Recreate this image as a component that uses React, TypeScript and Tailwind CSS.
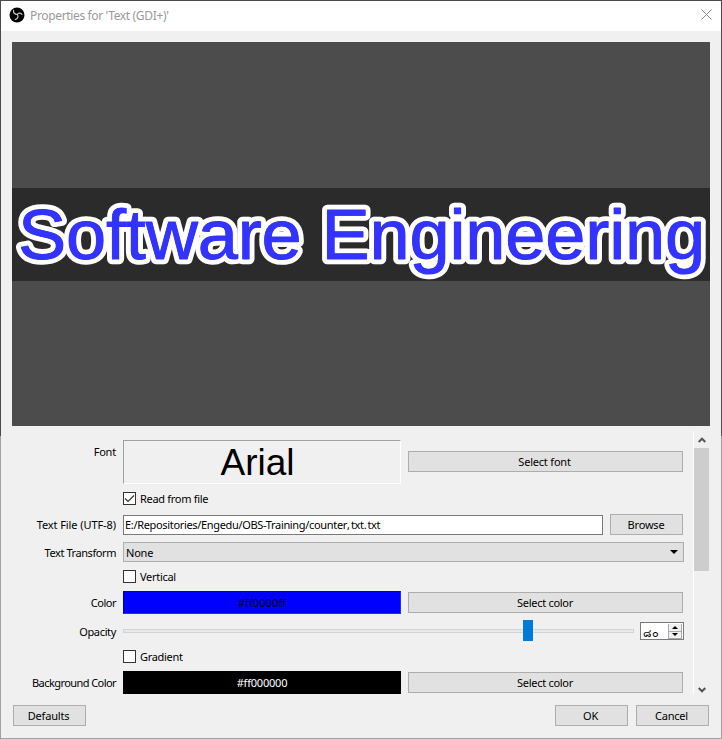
import type { ReactNode } from "react";

function Btn({ className = "", children }: { className?: string; children: ReactNode }) {
  return (
    <button className={`flex h-[21px] shrink-0 items-center justify-center border border-[#adadad] bg-[#e1e1e1] pr-[2px] ${className}`}>
      {children}
    </button>
  );
}

function Label({ className = "", children }: { className?: string; children?: ReactNode }) {
  return <div className={`mr-[7px] w-[104px] shrink-0 whitespace-nowrap text-right ${className}`}>{children}</div>;
}

function Check({ checked = false, children }: { checked?: boolean; children: ReactNode }) {
  return (
    <div className="flex h-[13px] items-center">
      <Label />
      <span className="mr-1 flex size-[13px] items-center justify-center border border-[#333] bg-white">
        {checked && (
          <svg width="11" height="11" viewBox="0 0 11 11" fill="none" stroke="#333" strokeWidth="1.2">
            <path d="M1 5.5 4 8.5 10 2.5" />
          </svg>
        )}
      </span>
      <span className="whitespace-nowrap tracking-[-0.3px]">{children}</span>
    </div>
  );
}

const previewFont = {
  x: 6,
  y: 71,
  fontSize: 71,
  fontFamily: "Liberation Sans, Arial, sans-serif",
  textLength: 687,
  lengthAdjust: "spacingAndGlyphs",
  strokeLinejoin: "round",
  paintOrder: "stroke",
} as const;

export default function App() {
  return (
    <div className="h-[739px] w-[722px] bg-[linear-gradient(to_bottom,#4c4a4c_436px,#a0a0a0_436px)] p-px">
      <div className="flex h-[737px] w-[720px] flex-col overflow-hidden bg-[#f0f0f0] font-['Noto_Sans','Liberation_Sans',sans-serif] text-[11px] leading-[13px] tracking-[-0.2px] text-black">
        <header className="flex h-[30px] shrink-0 items-center bg-white pl-2 pr-[9px] text-[12px] tracking-[-0.35px] text-[#999]">
          <svg width="16" height="16" viewBox="0 0 16 16" className="mr-[5px] mb-[2px]">
            <circle cx="8" cy="8" r="7.5" fill="#000" />
            <g fill="none" stroke="#c8c8c8" strokeWidth="1.2" strokeLinecap="round">
              <path d="M8.300 7.500C6 7.300 4.300 5.800 4.500 3.300" />
              <path d="M8.300 7.500C9.200 5.900 11.300 5.300 13 7.300" />
              <path d="M8.300 7.500C9.700 9.600 8.800 11.800 6.300 12.500" />
            </g>
          </svg>
          <span className="grow whitespace-nowrap pb-px">Properties for 'Text (GDI+)'</span>
          <svg width="11" height="11" viewBox="0 0 11 11" stroke="#888" strokeWidth="1" className="mb-[3px]">
            <path d="M.5.5l10 10M10.500 .5l-10 10" />
          </svg>
        </header>

        <div className="ml-[11px] mt-[11px] flex h-[384px] w-[698px] shrink-0 flex-col justify-center bg-[#4c4c4c]">
          <svg width="698" height="93" className="bg-[#2b2b2b]">
            <g className="blur-[0.6px]">
              <text {...previewFont} fill="#3333ff" stroke="#fff" strokeWidth="10.500">
                Software Engineering
              </text>
            </g>
            <g className="blur-[0.6px]" aria-hidden="true">
              <text {...previewFont} fill="#3333ff" stroke="#3333ff" strokeWidth="0.9">
                Software Engineering
              </text>
            </g>
          </svg>
        </div>

        <div className="ml-[11px] mt-[5px] flex h-[267px] w-[698px] shrink-0">
          <div className="flex grow flex-col pt-[9px]">
            <div className="flex h-[44px] items-start">
              <Label className="pt-[5px]">Font</Label>
              <div className="mr-[7px] flex h-[44px] w-[278px] items-center justify-center border border-[#a0a0a0] border-b-white border-r-white pr-[9px] font-['Liberation_Sans',Arial,sans-serif] text-[37px] leading-none tracking-normal">
                Arial
              </div>
              <Btn className="mt-[11px] w-[275px]">Select font</Btn>
            </div>
            <div className="mt-2">
              <Check checked>Read from file</Check>
            </div>
            <div className="mt-[9px] flex h-[21px] items-center">
              <Label className="tracking-[-0.08px]">Text File (UTF-8)</Label>
              <div className="mr-[7px] flex h-5 w-[480px] items-center whitespace-nowrap border border-[#7a7a7a] bg-white pl-px tracking-[-0.33px]">
                E:/Repositories/Engedu/OBS-Training/counter<span className="tracking-[1px]">,</span>txt<span className="tracking-[0.8px]">.</span>txt
              </div>
              <Btn className="w-[73px] pr-px">Browse</Btn>
            </div>
            <div className="mt-[7px] flex h-5 items-center">
              <Label className="tracking-[-0.42px]">Text Transform</Label>
              <div className="flex h-5 w-[561px] items-center justify-between border border-[#adadad] bg-[#e1e1e1] pl-[2px] pr-[5px]">
                None
                <svg width="8" height="4" viewBox="0 0 8 4"><path d="M0 0h8L4 4z" /></svg>
              </div>
            </div>
            <div className="mt-2">
              <Check>Vertical</Check>
            </div>
            <div className="mt-2 flex h-[23px] items-center">
              <Label className="tracking-[-0.5px]">Color</Label>
              <div className="mr-[7px] flex h-[23px] w-[278px] items-center justify-center border border-[#0000b0] border-b-[#2a2aff] border-r-[#2a2aff] bg-[#0000ff] tracking-[0.1px]">
                #ff0000ff
              </div>
              <Btn className="w-[275px] pr-px tracking-[-0.3px]">Select color</Btn>
            </div>
            <div className="mt-[6px] flex h-[21px] items-center">
              <Label className="pt-[2px] tracking-[-0.35px]">Opacity</Label>
              <div className="mr-[6px] flex h-[21px] w-[511px] items-center">
                <div className="h-1 w-[400px] border border-r-0 border-[#d0d4d2] bg-[#e7eaea]" />
                <div className="h-[21px] w-[10px] bg-[#007ad9]" />
                <div className="h-1 grow border border-l-0 border-[#d0d4d2] bg-[#e7eaea]" />
              </div>
              <div className="mt-[1px] flex h-[18px] w-[44px] items-center border border-[#7a7a7a] bg-white pr-px">
                <span className="grow pl-[2px] pt-[2px] text-[11px] tracking-[0.6px]">๘๐</span>
                <div className="flex w-[14px] flex-col">
                  <span className="flex h-2 items-center justify-center border border-t-0 border-[#aaa] bg-[#f0f0f0]">
                    <svg width="6" height="3" viewBox="0 0 6 3"><path d="M0 3h6L3 0z" /></svg>
                  </span>
                  <span className="flex h-[7px] items-center justify-center border border-t-0 border-[#aaa] bg-[#f0f0f0]">
                    <svg width="6" height="3" viewBox="0 0 6 3"><path d="M0 0h6L3 3z" /></svg>
                  </span>
                </div>
              </div>
            </div>
            <div className="mt-[9px]">
              <Check>Gradient</Check>
            </div>
            <div className="mt-2 flex h-[23px] items-center">
              <Label className="tracking-[-0.57px]">Background Color</Label>
              <div className="mr-[7px] flex h-[23px] w-[278px] items-center justify-center bg-black text-white">#ff000000</div>
              <Btn className="w-[275px] pr-px tracking-[-0.3px]">Select color</Btn>
            </div>
          </div>
          <div className="flex h-[263px] w-[17px] shrink-0 flex-col items-center border-l border-white">
            <svg width="8" height="17" viewBox="0 0 8 17" fill="none" stroke="#555" strokeWidth="2"><path d="M.7 11 4 7.700 7.300 11" /></svg>
            <div className="h-[123px] w-[15px] self-start bg-[#cdcdcd]" />
            <div className="grow" />
            <svg width="8" height="17" viewBox="0 0 8 17" fill="none" stroke="#555" strokeWidth="2"><path d="M.7 11 4 14.300 7.300 11" /></svg>
          </div>
        </div>

        <footer className="flex shrink-0 pl-3 pr-[12px] pt-[7px]">
          <Btn className="w-[73px]">Defaults</Btn>
          <div className="grow" />
          <Btn className="mr-2 w-[73px]">OK</Btn>
          <Btn className="w-[73px]">Cancel</Btn>
        </footer>
      </div>
    </div>
  );
}
